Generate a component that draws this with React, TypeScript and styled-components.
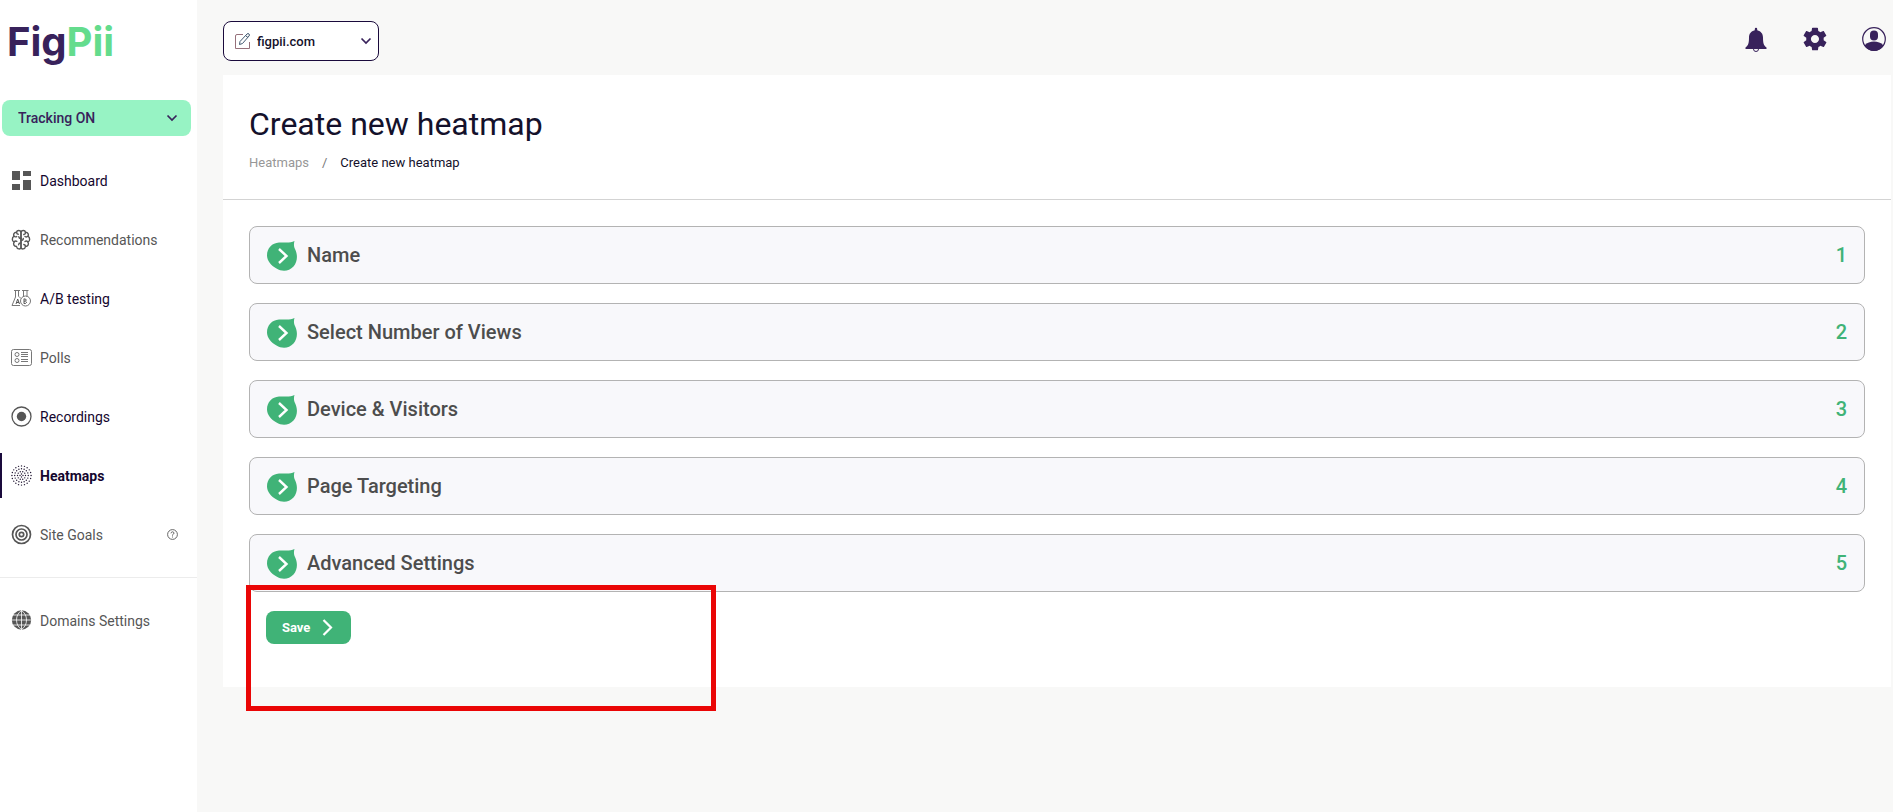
import React from "react";
import styled, { createGlobalStyle, css } from "styled-components";
import { IoMdSettings } from "react-icons/io";

const purple = "#38225b";
const ink = "#1a0a3c";
const grey = "#565656";
const green = "#40b377";

const GlobalStyle = createGlobalStyle`
  * { box-sizing: border-box; }
  body {
    margin: 0;
    background: #f8f8f7;
    font-family: Roboto, "Liberation Sans", sans-serif;
    font-size: 14px;
    color: #14112b;
  }
  svg { display: block; flex: none; }
`;

const Page = styled.div`
  display: flex;
  min-height: 100vh;
`;

const Sidebar = styled.aside`
  width: 197px;
  flex: none;
  background: #fff;
`;

const Logo = styled.a`
  display: block;
  height: 100px;
  padding: 18px 0 0 7px;
  font: 700 40px/48px Inter, sans-serif;
  color: ${purple};
  text-decoration: none;
`;

const LogoAccent = styled.span`
  color: #64dc8d;
`;

const SelectBox = styled.div`
  display: grid;
  align-items: center;
  > * { grid-row: 1; grid-column: 1; }
  > svg { pointer-events: none; z-index: 1; }
`;

const Select = styled.select`
  appearance: none;
  width: 100%;
  height: 100%;
  margin: 0;
  border: 0;
  background: none;
  font: inherit;
  color: inherit;
  cursor: pointer;
`;

const EndChevron = styled.svg`
  justify-self: end;
`;

const TrackingSelect = styled(SelectBox)`
  height: 36px;
  margin: 0 6px 0 2px;
  border-radius: 8px;
  background: #97f3c4;
  color: ${purple};
  font-weight: 500;
  ${Select} { padding: 0 40px 0 16px; }
  ${EndChevron} { margin-right: 13px; }
`;

const Nav = styled.nav`
  padding-top: 15px;
`;

const NavList = styled.ul<{ $divided?: boolean }>`
  list-style: none;
  margin: 0;
  padding: 0;
  ${(p) =>
    p.$divided &&
    css`
      margin-top: 13px;
      padding-top: 13px;
      border-top: 1px solid #ececec;
    `}
`;

const NavLink = styled.a<{ $tone: "dark" | "grey"; $active?: boolean }>`
  display: flex;
  align-items: center;
  gap: 8px;
  height: 59px;
  padding: 0 19px 0 11px;
  color: ${(p) => (p.$tone === "dark" ? "#14062e" : grey)};
  text-decoration: none;
  > span { flex: 1; }
  ${(p) =>
    p.$active &&
    css`
      height: 45px;
      margin: 7px 0;
      padding-left: 9px;
      border-left: 2px solid ${ink};
      font-weight: 700;
    `}
`;

const Main = styled.main`
  flex: 1;
  min-width: 0;
  padding: 0 2px 0 26px;
`;

const TopBar = styled.header`
  display: flex;
  align-items: center;
  justify-content: space-between;
  height: 75px;
  padding: 7px 5px 0 0;
`;

const DomainSelect = styled(SelectBox)`
  width: 156px;
  height: 40px;
  border: 1px solid ${ink};
  border-radius: 8px;
  background: #fff;
  font-size: 13px;
  font-weight: 500;
  ${Select} { padding: 0 30px 0 33px; }
  ${EndChevron} { margin-right: 6px; }
`;

const StartIcon = styled.svg`
  margin-left: 10px;
`;

const Actions = styled.div`
  display: flex;
  gap: 35px;
  padding-bottom: 5px;
`;

const IconButton = styled.button`
  display: flex;
  align-items: center;
  justify-content: center;
  width: 24px;
  height: 26px;
  padding: 0;
  border: 0;
  background: none;
  color: ${purple};
  cursor: pointer;
`;

const Card = styled.section`
  position: relative;
  padding-bottom: 43px;
  background: #fff;
`;

const CardHeader = styled.div`
  height: 125px;
  padding: 29px 26px 0;
  border-bottom: 1px solid #d3d3d3;
`;

const Title = styled.h1`
  margin: 0;
  font-size: 32px;
  font-weight: 400;
  line-height: 40px;
`;

const Breadcrumb = styled.nav`
  display: flex;
  gap: 13px;
  margin-top: 11px;
  font-size: 13px;
  line-height: 16px;
  a { color: #979797; text-decoration: none; }
  i { color: #777; font-style: normal; }
`;

const Steps = styled.div`
  display: flex;
  flex-direction: column;
  gap: 19px;
  padding: 26px 26px 0;
`;

const Step = styled.button`
  display: flex;
  align-items: center;
  gap: 10px;
  height: 58px;
  padding: 0 17px;
  border: 1px solid #b3b3b3;
  border-radius: 8px;
  background: #f8f8fb;
  color: #4d4d4d;
  font: 500 20px/24px Roboto, sans-serif;
  text-align: left;
  cursor: pointer;
`;

const StepNumber = styled.span`
  margin-left: auto;
  color: ${green};
`;

const SaveButton = styled.button`
  display: flex;
  align-items: center;
  gap: 12px;
  width: 85px;
  height: 33px;
  margin: 19px 0 0 43px;
  padding: 0 16px;
  border: 0;
  border-radius: 8px;
  background: ${green};
  color: #fff;
  font: 700 13px/16px Roboto, sans-serif;
  cursor: pointer;
`;

const Highlight = styled.div`
  position: absolute;
  left: 23px;
  bottom: -24px;
  width: 470px;
  height: 126px;
  border: 5px solid #ea0606;
  pointer-events: none;
`;

const Chevron = () => (
  <EndChevron width="12" height="8" viewBox="0 0 12 8" fill="none" stroke={purple} strokeWidth="1.700" aria-hidden>
    <path d="M1.500 1.500 6 6l4.500-4.500" />
  </EndChevron>
);

const EditIcon = () => (
  <StartIcon width="18" height="18" viewBox="0 0 18 18" fill="none" aria-hidden>
    <path d="M9 2.500H3q-1.500 0-1.500 1.500v12.500H15.500V10" stroke="#96707a" />
    <path d="m6 9.500 7-7.500q1-1 2 0t0 2L8.500 11.500l-3 1z" stroke="#41586f" />
    <path d="m12 4 2 1.500" stroke="#41586f" />
  </StartIcon>
);

const DashboardIcon = () => (
  <svg width="21" height="21" viewBox="0 0 21 21" fill={grey} aria-hidden>
    <path d="M1 1h8v9H1zM12 1h8v5h-8zM1 14h8v6H1zM12 10h8v10h-8z" />
  </svg>
);

const BrainIcon = () => (
  <svg width="21" height="21" viewBox="0 0 21 21" fill="none" stroke={grey} strokeWidth="1.400" strokeLinecap="round" aria-hidden>
    <path d="M10 3.200C9.500 1 6 .8 5.500 3.300 3 3.200 2 5.500 3 7.300.8 8.300.8 12 3 13c-1 2.200 0 4.500 2.500 4.500.5 3 4 3.200 4.500.8z" />
    <path d="M10 3.200C10.500 1 14 .8 14.500 3.300 17 3.200 18 5.500 17 7.300c2.200 1 2.200 4.700 0 5.700 1 2.200 0 4.500-2.500 4.500-.5 3-4 3.200-4.500.8z" />
    <path d="M5.500 3.300q.2 1.700 1.700 2M3 7.300q1.200 1 2.700.3M3 13q1.300-1.500 2.800-.7M10 9.500q-2 0-2.200-1.700M10 14q-2.200-.2-2.400 1.700M14.500 3.300q.2 1.700-1.700 2.200M17 7.300q-1.500 1.200-3 .2M17 13q-1.500-1.700-3-.5M10 11.500q2.200 0 2.300-2M14.500 17.500q0-1.700-1.700-2" />
  </svg>
);

const FlaskIcon = () => (
  <svg width="21" height="21" viewBox="0 0 21 21" fill="none" stroke="#777" strokeWidth="1" aria-hidden>
    <path d="M3 2.500h6M4.500 3v6L1 17.500h8M7.500 3v5.500M11 2.500h6.500M12.500 3v6M16 3v6" />
    <circle cx="14.500" cy="13" r="5" />
    <path d="M8 8.500l2 2" />
    <path d="m5 16 1.700-5L8.500 16M5.500 14.500h2.500M13 10.700v5M13 11h1.500q1.500 1 0 2.200H13M14.500 13.200q2.200 1 0 2.300H13" stroke={grey} />
  </svg>
);

const PollsIcon = () => (
  <svg width="21" height="21" viewBox="0 0 21 21" fill="none" stroke="#777" aria-hidden>
    <rect x="0.500" y="2.500" width="20" height="16" rx="2" />
    <circle cx="6" cy="7.500" r="2" />
    <circle cx="6" cy="13.500" r="2" />
    <path d="M10 5.500h7M10 7.500h7M10 9.500h7M10 12.500h7M10 14.500h7" />
  </svg>
);

const RecordIcon = () => (
  <svg width="21" height="21" viewBox="0 0 21 21" aria-hidden>
    <circle cx="10.500" cy="10.500" r="9.500" fill="none" stroke={grey} strokeWidth="1.300" />
    <circle cx="10.500" cy="10.500" r="4.700" fill={grey} />
  </svg>
);

const rings = [
  { radius: 1.5, count: 4 },
  { radius: 4, count: 10 },
  { radius: 6.8, count: 16 },
  { radius: 9.6, count: 20 },
];

const HeatmapIcon = () => (
  <svg width="21" height="21" viewBox="0 0 21 21" fill="#1f1430" aria-hidden>
    {rings.flatMap(({ radius, count }) =>
      Array.from({ length: count }, (_, i) => {
        const a = (i / count) * Math.PI * 2;
        return (
          <circle
            key={`${radius}-${i}`}
            cx={10.5 + radius * Math.cos(a)}
            cy={10.5 + radius * Math.sin(a)}
            r="0.700"
          />
        );
      })
    )}
  </svg>
);

const GoalIcon = () => (
  <svg width="21" height="21" viewBox="0 0 21 21" fill="none" stroke={grey} strokeWidth="1.700" aria-hidden>
    <circle cx="10.500" cy="10.500" r="9" />
    <circle cx="10.500" cy="10.500" r="5.500" />
    <circle cx="10.500" cy="10.500" r="2.200" />
  </svg>
);

const HelpIcon = () => (
  <svg width="11" height="11" viewBox="0 0 11 11" fill="none" stroke={grey} strokeWidth="0.900" role="img" aria-label="Help">
    <circle cx="5.500" cy="5.500" r="4.900" />
    <path d="M4 4.300q.2-1.500 1.500-1.500T7 4.100Q7 5 5.500 5.800v.8M5.500 7.500v1" />
  </svg>
);

const GlobeIcon = () => (
  <svg width="21" height="21" viewBox="0 0 21 21" fill="none" aria-hidden>
    <circle cx="10.500" cy="10" r="9.700" fill={grey} />
    <path d="M10.500 0v20M0 10h21M2 5h17M2 15h17M10.500 .5q-5 3.500-5 9.500t5 9.500M10.500 .5q5 3.500 5 9.500t-5 9.500" stroke="#fff" strokeWidth="0.800" />
  </svg>
);

const BellIcon = () => (
  <svg width="22" height="26" viewBox="0 -2 22 26" fill="currentColor" aria-hidden>
    <path d="M9.800 1a1.200 1.200 0 0 1 2.400 0v1.300c3.900.9 5.800 3.700 5.800 7.200 0 5.500.6 8 3.500 10V21H.5v-1.500c2.900-2 3.500-4.500 3.500-10 0-3.500 1.900-6.300 5.800-7.200z" />
    <path d="M8.500 21a2.500 2.500 0 0 0 5 0" fill="none" stroke="currentColor" />
  </svg>
);

const UserIcon = () => (
  <svg width="24" height="24" viewBox="0 0 24 24" aria-hidden>
    <circle cx="12" cy="12" r="11.300" fill="none" stroke="currentColor" strokeWidth="1.200" />
    <rect x="8" y="3.500" width="8" height="10" rx="4" fill="currentColor" />
    <path d="M2.500 18.500C5 15.500 8.500 14.500 12 14.500s7 1 9.500 4C19.500 22 16 24 12 24s-7.500-2-9.500-5.500z" fill="currentColor" />
  </svg>
);

const StepIcon = () => (
  <svg width="30" height="32" viewBox="0 -2 30 32" aria-hidden>
    <path d="M27.500 0C26.500 3 27 6 28 8c3 6 2.500 13-1.500 17.500-4.500 5-11.500 5.500-17 2C4 24.500 0 19.500 0 14.500 0 7 5 2 12 1.500c6-.2 11 1 15.500-1.500z" fill={green} />
    <path d="m12 8 7.500 7-7.500 7" fill="none" stroke="#fff" strokeWidth="2.400" />
  </svg>
);

const SaveArrow = () => (
  <svg width="11" height="17" viewBox="0 0 11 17" fill="none" stroke="#fff" strokeWidth="2.200" aria-hidden>
    <path d="m1.500 1 7.500 7.500L1.500 16" />
  </svg>
);

type Item = {
  label: string;
  icon: React.ReactNode;
  tone: "dark" | "grey";
  active?: boolean;
  help?: boolean;
};

const items: Item[] = [
  { label: "Dashboard", icon: <DashboardIcon />, tone: "dark" },
  { label: "Recommendations", icon: <BrainIcon />, tone: "grey" },
  { label: "A/B testing", icon: <FlaskIcon />, tone: "dark" },
  { label: "Polls", icon: <PollsIcon />, tone: "grey" },
  { label: "Recordings", icon: <RecordIcon />, tone: "dark" },
  { label: "Heatmaps", icon: <HeatmapIcon />, tone: "dark", active: true },
  { label: "Site Goals", icon: <GoalIcon />, tone: "grey", help: true },
];

const domainItem: Item = { label: "Domains Settings", icon: <GlobeIcon />, tone: "grey" };

const steps = ["Name", "Select Number of Views", "Device & Visitors", "Page Targeting", "Advanced Settings"];

const NavItem = ({ label, icon, tone, active, help }: Item) => (
  <li>
    <NavLink href="#" $tone={tone} $active={active} aria-current={active ? "page" : undefined}>
      {icon}
      <span>{label}</span>
      {help && <HelpIcon />}
    </NavLink>
  </li>
);

export default function App() {
  return (
    <>
      <GlobalStyle />
      <Page>
        <Sidebar>
          <Logo href="#">
            Fig<LogoAccent>Pii</LogoAccent>
          </Logo>
          <TrackingSelect>
            <Select aria-label="Tracking">
              <option>Tracking ON</option>
            </Select>
            <Chevron />
          </TrackingSelect>
          <Nav aria-label="Main">
            <NavList>
              {items.map((item) => (
                <NavItem key={item.label} {...item} />
              ))}
            </NavList>
            <NavList $divided>
              <NavItem {...domainItem} />
            </NavList>
          </Nav>
        </Sidebar>
        <Main>
          <TopBar>
            <DomainSelect>
              <EditIcon />
              <Select aria-label="Domain">
                <option>figpii.com</option>
              </Select>
              <Chevron />
            </DomainSelect>
            <Actions>
              <IconButton aria-label="Notifications"><BellIcon /></IconButton>
              <IconButton aria-label="Settings"><IoMdSettings size={28} /></IconButton>
              <IconButton aria-label="Account"><UserIcon /></IconButton>
            </Actions>
          </TopBar>
          <Card>
            <CardHeader>
              <Title>Create new heatmap</Title>
              <Breadcrumb aria-label="Breadcrumb">
                <a href="#">Heatmaps</a>
                <i>/</i>
                <span>Create new heatmap</span>
              </Breadcrumb>
            </CardHeader>
            <Steps>
              {steps.map((name, index) => (
                <Step key={name} type="button" aria-expanded={false}>
                  <StepIcon />
                  {name}
                  <StepNumber>{index + 1}</StepNumber>
                </Step>
              ))}
            </Steps>
            <SaveButton type="submit">
              Save
              <SaveArrow />
            </SaveButton>
            <Highlight />
          </Card>
        </Main>
      </Page>
    </>
  );
}
